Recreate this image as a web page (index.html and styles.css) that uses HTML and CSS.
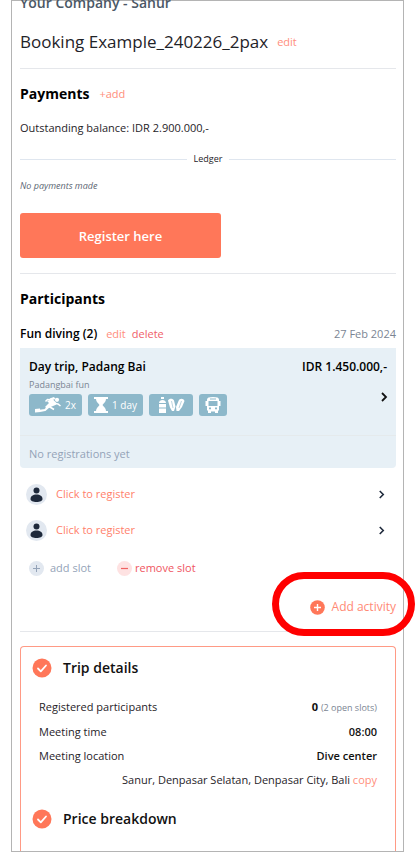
FILE: index.html
```html
<!DOCTYPE html>
<html lang="en">
<head>
<meta charset="utf-8">
<meta name="viewport" content="width=device-width, initial-scale=1">
<title>Booking Example_240226_2pax</title>
<link rel="stylesheet" href="styles.css">
</head>
<body>
<svg class="sprite" aria-hidden="true">
  <symbol id="chevron" viewBox="0 0 8 10"><path d="M2 1l4 4-4 4" fill="none" stroke="currentColor" stroke-width="1.8"/></symbol>
  <symbol id="person" viewBox="0 0 21 21"><circle cx="10.500" cy="10.500" r="10.500" fill="#e2e8f0"/><circle cx="10.500" cy="6.500" r="3" fill="#1e293b"/><path d="M4.500 15c0-3 2.500-4.500 6-4.500s6 1.500 6 4.500c0 2-2.500 3-6 3s-6-1-6-3z" fill="#1e293b"/></symbol>
  <symbol id="check" viewBox="0 0 20 20"><circle cx="10" cy="10" r="9.500" fill="#ff7759"/><path d="M6 10.500l2.800 2.800L14 7.500" fill="none" stroke="#fff" stroke-width="1.800" stroke-linecap="round" stroke-linejoin="round"/></symbol>
</svg>
<main class="frame">
  <p class="company">Your Company - Sanur</p>
  <div class="title-row">
    <h1>Booking Example_240226_2pax</h1>
    <a class="link" href="#edit">edit</a>
  </div>
  <hr>
  <section>
    <div class="section-head">
      <h2>Payments</h2>
      <a class="link" href="#add">+add</a>
    </div>
    <p class="balance">Outstanding balance: IDR 2.900.000,-</p>
    <div class="ledger"><span>Ledger</span></div>
    <p class="empty">No payments made</p>
    <button class="register" type="button">Register here</button>
  </section>
  <hr class="after-button">
  <section>
    <div class="section-head"><h2>Participants</h2></div>
    <div class="activity-head">
      <h3>Fun diving (2)</h3>
      <a class="link" href="#edit-activity">edit</a>
      <a class="link danger" href="#delete">delete</a>
      <time datetime="2024-02-27">27 Feb 2024</time>
    </div>
    <article class="trip">
      <div class="trip-main">
        <div class="trip-title"><strong>Day trip, Padang Bai</strong><strong>IDR 1.450.000,-</strong></div>
        <p class="trip-sub">Padangbai fun</p>
        <div class="chips">
          <span class="chip"><svg width="26" height="18" viewBox="0 0 26 18" fill="#fff"><path d="M0 13l5-.5.500 3.500-5.500.5z"/><path d="M14 5l6 3-6 2.500-4 3.500-5 .8" fill="none" stroke="#fff" stroke-width="2.200" stroke-linejoin="round"/><path d="M12 5l6-1.500 4 4-6 2.500-4 2.500-2-1.500 4-4z"/><path d="M17 4l-4.500-.5-2 2M14 10.500l5 3M20 7.500l3 .5 2.500 2" fill="none" stroke="#fff" stroke-width="1.600"/><path d="M14.500 2.500l4.500-1.500 1.500 2-4.500 1.500z"/><circle cx="22" cy="3.800" r="2.100"/></svg>2x</span>
          <span class="chip"><svg width="14" height="18" viewBox="0 0 14 18" fill="#fff"><path d="M0 1h14v2H0zM0 15h14v2H0zM2 3h10c0 3-2.500 4.500-3.500 6 1 1.500 3.500 3 3.500 6H2c0-3 2.500-4.500 3.500-6C4.500 7.500 2 6 2 3z"/></svg>1 day</span>
          <span class="chip gear"><svg width="28" height="18" viewBox="0 0 28 18" fill="#fff"><path d="M4 1h3v2H4zM2 7c0-4 7-4 7 0zM2 8h7v3.500H2zM2 12.500h7V17H2z"/><path d="M11 4.500c1-2.500 5-2.500 6 0l1.500 6-1.500 4.500h-2l-2-3.500zM27.500 5c-1-3-5-3-6 0l-2.500 6 .5 4h2.500l3-4z"/><path d="M14.500 5l1.500 7M24.500 5l-2.500 7" fill="none" stroke="#8db8ca" stroke-width=".6"/></svg></span>
          <span class="chip"><svg width="16" height="18" viewBox="0 0 16 18"><path fill="#fff" fill-rule="evenodd" d="M8 1c4 0 6 .8 6 2.500V5h1.500v5H14v4l-1 1v2h-3v-1.500H6V17H3v-2l-1-1v-4H.5V5H2V3.500C2 1.800 4 1 8 1zM5 2.500v1h6v-1zM3.500 5v5h9V5zM4 11.500v1.800h2v-1.800zM10 11.500v1.800h2v-1.800z"/></svg></span>
        </div>
        <svg class="trip-chevron" width="8" height="10" aria-hidden="true"><use href="#chevron"/></svg>
      </div>
      <p class="trip-foot">No registrations yet</p>
    </article>
    <ul class="slots">
      <li><a href="#slot-1"><svg width="21" height="21"><use href="#person"/></svg>Click to register<svg class="go" width="7" height="9"><use href="#chevron"/></svg></a></li>
      <li><a href="#slot-2"><svg width="21" height="21"><use href="#person"/></svg>Click to register<svg class="go" width="7" height="9"><use href="#chevron"/></svg></a></li>
    </ul>
    <div class="slot-actions">
      <button class="add-slot" type="button"><svg width="15" height="15" viewBox="0 0 15 15"><circle cx="7.500" cy="7.500" r="7.500" fill="#e2e8f0"/><path d="M4 7.500h7M7.500 4v7" stroke="#94a3b8"/></svg>add slot</button>
      <button class="remove-slot" type="button"><svg width="15" height="15" viewBox="0 0 15 15"><circle cx="7.500" cy="7.500" r="7.500" fill="#fee2e2"/><path d="M4 7.500h7" stroke="#ef6262" stroke-width="1.200"/></svg>remove slot</button>
    </div>
    <div class="add-row">
      <button class="add-activity" type="button"><svg width="15" height="15" viewBox="0 0 15 15"><circle cx="7.500" cy="7.500" r="7.300" fill="#ff7759"/><path d="M4 7.500h7M7.500 4v7" stroke="#fff" stroke-width="1.400"/></svg>Add activity</button>
      <span class="highlight"></span>
    </div>
  </section>
  <hr class="after-add">
  <section class="details">
    <h2 class="check-title"><svg width="20" height="20"><use href="#check"/></svg>Trip details</h2>
    <dl>
      <div><dt>Registered participants</dt><dd><b>0</b> <small>(2 open slots)</small></dd></div>
      <div><dt>Meeting time</dt><dd>08:00</dd></div>
      <div><dt>Meeting location</dt><dd>Dive center</dd></div>
    </dl>
    <p class="address">Sanur, Denpasar Selatan, Denpasar City, Bali <a class="link" href="#copy">copy</a></p>
    <h2 class="check-title"><svg width="20" height="20"><use href="#check"/></svg>Price breakdown</h2>
  </section>
</main>
</body>
</html>
```
FILE: styles.css
```css
* { box-sizing: border-box; }
html { background: #fff; }
body {
  margin: 0;
  font-family: "Segoe UI", "Open Sans", "Noto Sans", sans-serif;
  font-size: 11px;
  line-height: 20px;
  color: #1f2328;
  overflow: hidden;
}
h1, h2, h3, p, ul, dl, dd { margin: 0; padding: 0; font-weight: 400; }
button { font: inherit; border: 0; background: none; padding: 0; cursor: pointer; }
a { text-decoration: none; }
svg { flex: none; display: block; }
.sprite { width: 0; height: 0; position: absolute; }
hr { width: 100%; border: 0; height: 1px; background: #e5e7eb; margin: 12px 0 13px; }
hr.after-button { margin-top: 15px; }
hr.after-add { margin: 14px 0; }

.frame {
  display: flex;
  flex-direction: column;
  height: 100vh;
  margin: 0 11px;
  padding: 0 7px 0 8px;
  border: 1px solid #b4b4b4;
}
.frame > * { flex: none; }
.company { margin-top: -8px; font-size: 14px; font-weight: 600; color: #4b5866; }
.title-row { display: flex; align-items: center; gap: 9px; margin-top: 15px; line-height: 28px; }
h1 { font-size: 17px; }
.link { color: #ff8e7b; }
.danger { color: #f0606a; }

.section-head { display: flex; align-items: center; gap: 10px; line-height: 24px; }
.section-head h2 { font-size: 14px; font-weight: 700; color: #000; }
.balance { margin-top: 12px; }
.ledger { display: flex; align-items: center; gap: 7px; margin-top: 15px; font-size: 9px; line-height: 12px; }
.ledger::before, .ledger::after { content: ""; flex: 1; height: 1px; background: #dfe6ef; }
.empty { margin-top: 13px; font-size: 9px; line-height: 16px; font-style: italic; color: #5b6673; }
.register {
  display: block;
  width: 201px;
  height: 45px;
  margin-top: 19px;
  border-radius: 3px;
  background: #ff7759;
  color: #fff;
  font-size: 13px;
  font-weight: 600;
}

.activity-head { display: flex; align-items: center; gap: 6px; margin-top: 13px; }
.activity-head h3 { margin-right: 3px; font-size: 12px; font-weight: 600; color: #000; }
.activity-head time { margin-left: auto; color: #7b8593; }

.trip { margin-top: 4px; border-radius: 0 0 4px 4px; background: #e7f0f6; }
.trip-main { position: relative; padding: 9px 9px 19px; border-bottom: 1px solid #e5eaec; }
.trip-title { display: flex; justify-content: space-between; font-size: 12px; color: #000; }
.trip-title strong { font-weight: 600; }
.trip-sub { margin-top: 2px; font-size: 9px; line-height: 12px; color: #7b8593; }
.chips { display: flex; gap: 6px; margin-top: 3px; }
.chip {
  display: flex;
  align-items: center;
  gap: 4px;
  height: 22px;
  padding: 0 6px;
  border-radius: 3px;
  background: #8db8ca;
  color: #fff;
  font-size: 10px;
}
.chip.gear { padding: 0 8px; }
.trip-chevron { position: absolute; right: 8px; top: 44px; color: #111; }
.trip-foot { padding: 8px 9px 4px; color: #94a3b8; }

.slots { list-style: none; margin-top: 8px; }
.slots a { display: flex; align-items: center; gap: 9px; height: 36px; padding: 0 11px 0 6px; color: #ff7f6b; }
.go { margin-left: auto; color: #1e293b; }
.slot-actions { display: flex; gap: 26px; margin-top: 10px; padding-left: 9px; }
.slot-actions button, .add-activity { display: flex; align-items: center; }
.slot-actions .add-slot { gap: 6px; color: #94a3b8; }
.slot-actions .remove-slot { gap: 3px; color: #ef5561; }
.add-row { position: relative; display: flex; justify-content: flex-end; margin-top: 19px; }
.add-activity { gap: 7px; font-size: 12px; color: #ff8a75; }
.highlight {
  position: absolute;
  top: -25px;
  right: -19px;
  width: 143px;
  height: 64px;
  border: 7px solid #f00;
  border-radius: 32px;
  pointer-events: none;
}

.frame > .details {
  flex: 1 0 0;
  min-height: 0;
  padding: 9px 18px 0;
  border: 1px solid #ff9a85;
  border-bottom: 0;
  border-radius: 4px 4px 0 0;
}
.check-title { display: flex; align-items: center; gap: 11px; height: 24px; margin-left: -7px; font-size: 14px; font-weight: 600; color: #111; }
.details dl { margin-top: 15px; line-height: 24px; }
.details dl div { display: flex; justify-content: space-between; }
.details dd { font-weight: 600; color: #111; }
.details b { font-weight: 700; }
.details small { font-size: 9px; font-weight: 400; color: #7b8593; }
.address { text-align: right; line-height: 24px; margin-bottom: 15px; white-space: nowrap; }
```
